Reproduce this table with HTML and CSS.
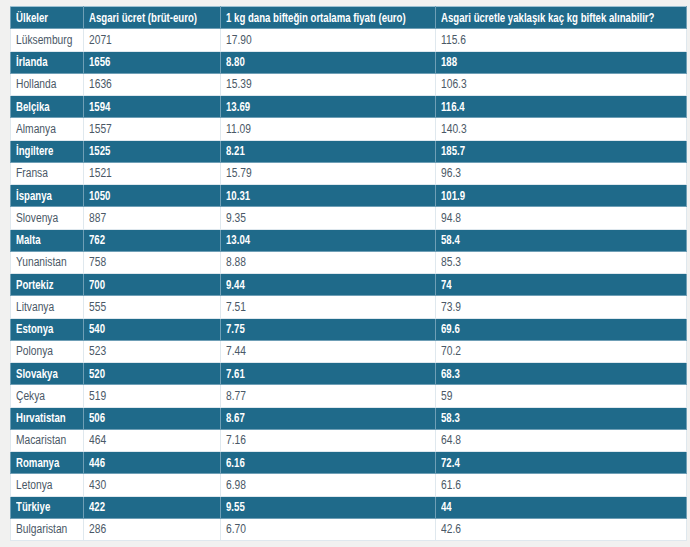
FILE: index.html
```html
<!DOCTYPE html>
<html lang="tr">
<head>
<meta charset="utf-8">
<link rel="stylesheet" href="styles.css">
</head>
<body>
<div class="wrap">
<table class="data">
<colgroup><col class="c1"><col class="c2"><col class="c3"><col class="c4"></colgroup>
<tr class="dark"><td><span>Ülkeler</span></td><td><span>Asgari ücret (brüt-euro)</span></td><td><span>1 kg dana bifteğin ortalama fiyatı (euro)</span></td><td><span>Asgari ücretle yaklaşık kaç kg biftek alınabilir?</span></td></tr>
<tr><td><span>Lüksemburg</span></td><td><span>2071</span></td><td><span>17.90</span></td><td><span>115.6</span></td></tr>
<tr class="dark"><td><span>İrlanda</span></td><td><span>1656</span></td><td><span>8.80</span></td><td><span>188</span></td></tr>
<tr><td><span>Hollanda</span></td><td><span>1636</span></td><td><span>15.39</span></td><td><span>106.3</span></td></tr>
<tr class="dark"><td><span>Belçika</span></td><td><span>1594</span></td><td><span>13.69</span></td><td><span>116.4</span></td></tr>
<tr><td><span>Almanya</span></td><td><span>1557</span></td><td><span>11.09</span></td><td><span>140.3</span></td></tr>
<tr class="dark"><td><span>İngiltere</span></td><td><span>1525</span></td><td><span>8.21</span></td><td><span>185.7</span></td></tr>
<tr><td><span>Fransa</span></td><td><span>1521</span></td><td><span>15.79</span></td><td><span>96.3</span></td></tr>
<tr class="dark"><td><span>İspanya</span></td><td><span>1050</span></td><td><span>10.31</span></td><td><span>101.9</span></td></tr>
<tr><td><span>Slovenya</span></td><td><span>887</span></td><td><span>9.35</span></td><td><span>94.8</span></td></tr>
<tr class="dark"><td><span>Malta</span></td><td><span>762</span></td><td><span>13.04</span></td><td><span>58.4</span></td></tr>
<tr><td><span>Yunanistan</span></td><td><span>758</span></td><td><span>8.88</span></td><td><span>85.3</span></td></tr>
<tr class="dark"><td><span>Portekiz</span></td><td><span>700</span></td><td><span>9.44</span></td><td><span>74</span></td></tr>
<tr><td><span>Litvanya</span></td><td><span>555</span></td><td><span>7.51</span></td><td><span>73.9</span></td></tr>
<tr class="dark"><td><span>Estonya</span></td><td><span>540</span></td><td><span>7.75</span></td><td><span>69.6</span></td></tr>
<tr><td><span>Polonya</span></td><td><span>523</span></td><td><span>7.44</span></td><td><span>70.2</span></td></tr>
<tr class="dark"><td><span>Slovakya</span></td><td><span>520</span></td><td><span>7.61</span></td><td><span>68.3</span></td></tr>
<tr><td><span>Çekya</span></td><td><span>519</span></td><td><span>8.77</span></td><td><span>59</span></td></tr>
<tr class="dark"><td><span>Hırvatistan</span></td><td><span>506</span></td><td><span>8.67</span></td><td><span>58.3</span></td></tr>
<tr><td><span>Macaristan</span></td><td><span>464</span></td><td><span>7.16</span></td><td><span>64.8</span></td></tr>
<tr class="dark"><td><span>Romanya</span></td><td><span>446</span></td><td><span>6.16</span></td><td><span>72.4</span></td></tr>
<tr><td><span>Letonya</span></td><td><span>430</span></td><td><span>6.98</span></td><td><span>61.6</span></td></tr>
<tr class="dark"><td><span>Türkiye</span></td><td><span>422</span></td><td><span>9.55</span></td><td><span>44</span></td></tr>
<tr><td><span>Bulgaristan</span></td><td><span>286</span></td><td><span>6.70</span></td><td><span>42.6</span></td></tr>
</table>
</div>
</body>
</html>
```
FILE: styles.css
```css
html, body {
  margin: 0;
  padding: 0;
  background: #f1f1f0;
}
.wrap {
  padding: 6px 0 0 10px;
}
.data {
  border-collapse: collapse;
  table-layout: fixed;
  width: 676px;
  background: #ffffff;
  font-family: "Liberation Sans", Arial, sans-serif;
  font-size: 12.5px;
  color: #4a5866;
}
.c1 { width: 73px; }
.c2 { width: 137px; }
.c3 { width: 215px; }
.c4 { width: 251px; }
.data td {
  height: 22.25px;
  box-sizing: border-box;
  padding: 0 5px;
  border: 1px solid #dfe8ee;
  white-space: nowrap;
  overflow: visible;
  vertical-align: middle;
}
.data td span {
  display: inline-block;
  transform: scaleX(0.82);
  transform-origin: 0 50%;
}
.data tr.dark td {
  background: #1f6a8a;
  color: #ffffff;
  font-weight: bold;
  border-color: #6f9fb6;
  border-top-color: #9cc0d2;
}
.data tr.dark td span {
  transform: scaleX(0.77);
}
```
